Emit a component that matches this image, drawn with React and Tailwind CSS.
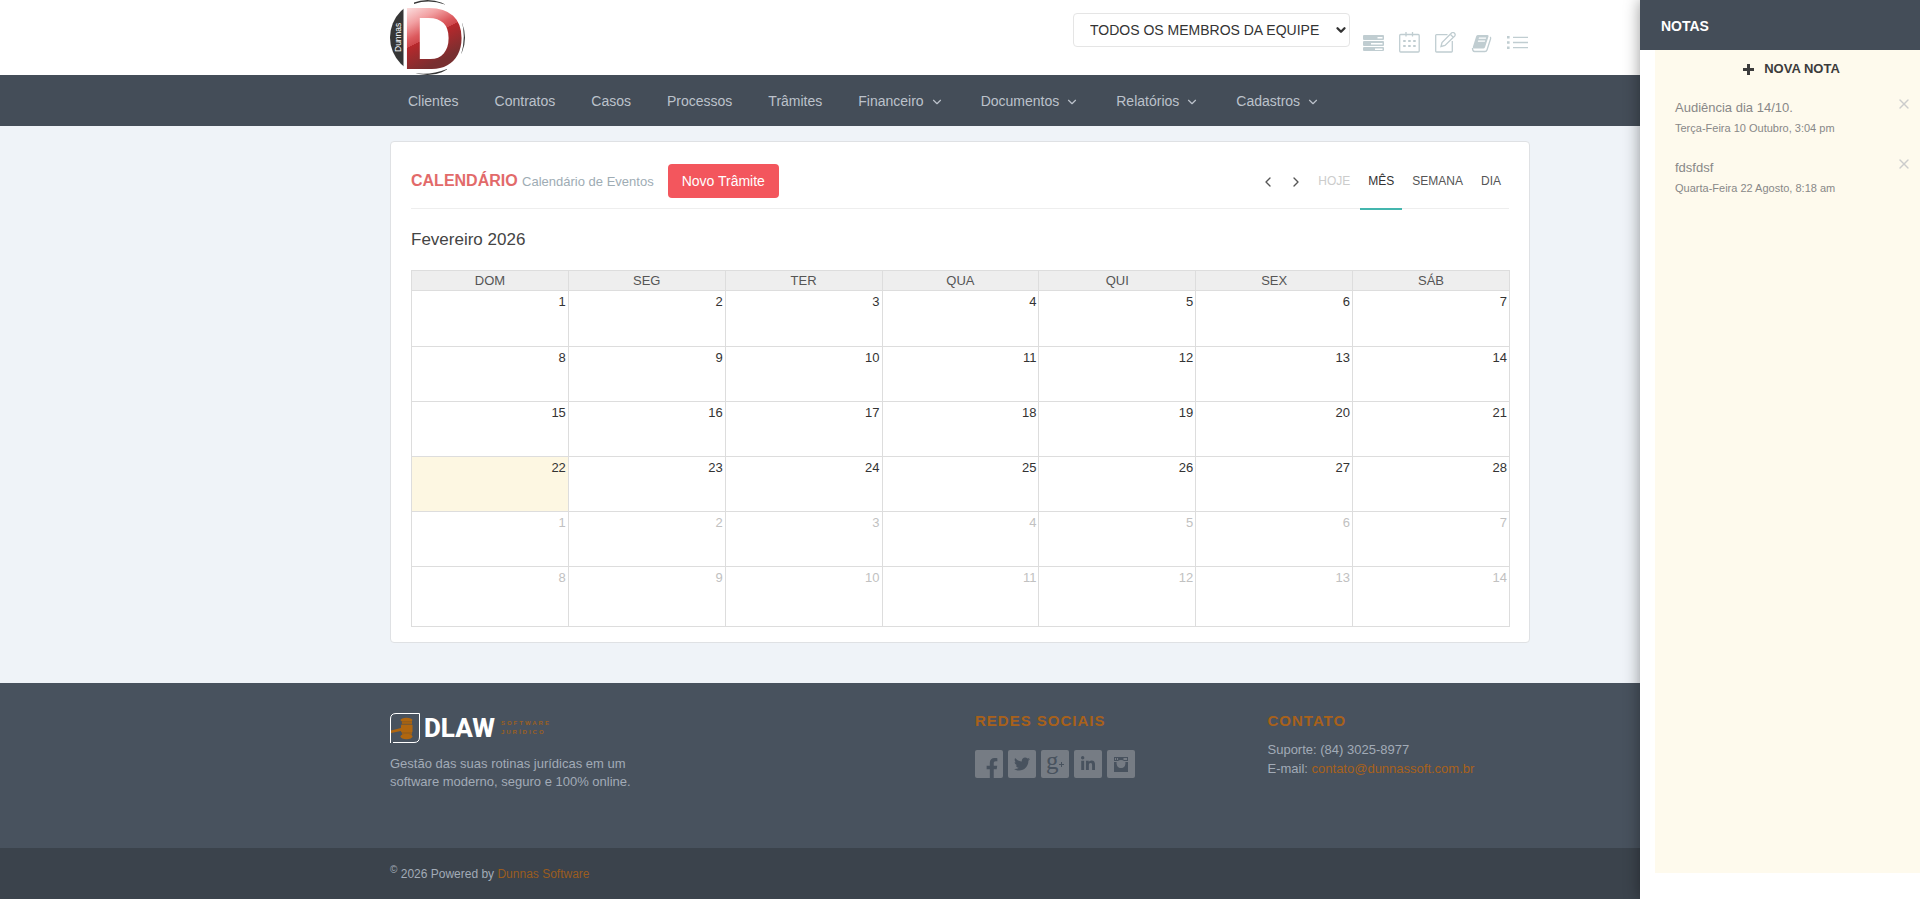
import { useState } from 'react';
import { ChevronLeft, ChevronRight, ChevronDown, X } from 'lucide-react';
import { FaFacebookF, FaTwitter, FaLinkedinIn } from 'react-icons/fa';

const navLinks = [
  { label: 'Clientes' },
  { label: 'Contratos' },
  { label: 'Casos' },
  { label: 'Processos' },
  { label: 'Trâmites' },
  { label: 'Financeiro', menu: true },
  { label: 'Documentos', menu: true },
  { label: 'Relatórios', menu: true },
  { label: 'Cadastros', menu: true },
];

const weekDays = ['DOM', 'SEG', 'TER', 'QUA', 'QUI', 'SEX', 'SÁB'];
const DAYS_IN_MONTH = 28;
const TODAY = 22;

const weeks = Array.from({ length: 6 }, (_, w) =>
  Array.from({ length: 7 }, (_, d) => {
    const n = w * 7 + d + 1;
    return n > DAYS_IN_MONTH ? { day: n - DAYS_IN_MONTH, other: true } : { day: n, other: false };
  })
);

const views = ['MÊS', 'SEMANA', 'DIA'];

const initialNotes = [
  { id: 1, text: 'Audiência dia 14/10.', date: 'Terça-Feira 10 Outubro, 3:04 pm' },
  { id: 2, text: 'fdsfdsf', date: 'Quarta-Feira 22 Agosto, 8:18 am' },
];

function DunnasLogo() {
  return (
    <svg viewBox="0 0 75 75" className="w-[75px] h-[75px] overflow-visible" role="img" aria-label="Dunnas">
      <defs>
        {/* hard stop at 0.6 is the edge of the shine */}
        <linearGradient id="letter" gradientUnits="userSpaceOnUse" x1="14" y1="5" x2="44" y2="64">
          <stop offset="0" stopColor="#fdeeee" />
          <stop offset="0.3" stopColor="#f2a0a2" />
          <stop offset="0.5" stopColor="#dc5a5e" />
          <stop offset="0.6" stopColor="#cf484c" />
          <stop offset="0.6" stopColor="#b8282c" />
          <stop offset="1" stopColor="#782f30" />
        </linearGradient>
        <clipPath id="disc"><circle cx="37.5" cy="37.5" r="37.5" /></clipPath>
      </defs>
      <g clipPath="url(#disc)" fill="#363636">
        <path d="M0 8H13.5V67H0Z" />
        <path d="M24 4Q39 -1 55 4.500V0H24Z" />
        <path d="M24 73Q41 75.500 57 69V75H24Z" />
        <path d="M72 22Q76 38 71 55H75V22Z" />
      </g>
      <text transform="translate(11 52) rotate(-90)" fontSize="8.500" fill="#fff" fontFamily="Liberation Sans, sans-serif">Dunnas</text>
      <text x="11" y="68.500" fontSize="89" fontWeight="700" fill="url(#letter)" fontFamily="Liberation Sans, sans-serif">D</text>
    </svg>
  );
}

function TasksIcon() {
  return (
    <svg viewBox="0 0 21 21" className="w-[21px] h-[21px]" fill="currentColor">
      <path fillRule="evenodd" d="M1 3H20Q21 3 21 4V7Q21 8 20 8H1Q0 8 0 7V4Q0 3 1 3ZM14.500 5V6.500H19.500V5ZM1 9H20Q21 9 21 10V13Q21 14 20 14H1Q0 14 0 13V10Q0 9 1 9ZM8 11V12.500H19.500V11ZM1 15H20Q21 15 21 16V18Q21 19 20 19H1Q0 19 0 18V16Q0 15 1 15ZM12 16.500V18H19.500V16.500Z" />
    </svg>
  );
}

function CalendarIcon() {
  return (
    <svg viewBox="0 0 21 21" className="w-[21px] h-[21px]" fill="none" stroke="currentColor" strokeWidth="1.300">
      <rect x="0.700" y="2.500" width="19.500" height="17.500" rx="1" />
      <path d="M7 0V4.500M13.500 0V4.500" />
      <path strokeWidth="2" strokeDasharray="2.500 2.500" d="M4.200 9H17M4.200 14H17" />
    </svg>
  );
}

function NoteIcon() {
  return (
    <svg viewBox="0 0 21 21" className="w-[21px] h-[21px]" fill="none" stroke="currentColor" strokeWidth="1.300">
      <path d="M12.500 2.700H1.500Q0.700 2.700 0.700 3.500V19.200Q0.700 20 1.500 20H16.500Q17.300 20 17.300 19.200V9" />
      <path d="M6 14.500L7 10.500L16.500 1Q18 -0.200 19.500 1.200Q20.800 2.700 19.700 4L10 13.500Z" />
      <path d="M15.500 2.500L18 5" />
    </svg>
  );
}

function BookIcon() {
  return (
    <svg viewBox="0 0 21 21" className="w-[21px] h-[21px]">
      <path fill="currentColor" fillRule="evenodd" d="M7 3H16.500Q18 3 17.500 4.500L14 15.300Q13.500 16.500 12.300 16.500H3Q1.500 16.500 1.800 15L5.200 4.300Q5.700 3 7 3ZM8 5.500L7.600 6.700H14.800L15.200 5.500ZM7.200 8.500L6.800 9.700H13.800L14.200 8.500Z" />
      <path fill="none" stroke="currentColor" strokeWidth="1.300" d="M19 5Q20 5.500 19.600 6.700L16 18Q15.500 19.500 14 19.500H3.500Q1.500 19.500 1.500 16" />
    </svg>
  );
}

function ListIcon() {
  return (
    <svg viewBox="0 0 21 21" className="w-[21px] h-[21px]">
      <path fill="currentColor" d="M0 4H2.600V6.600H0ZM0 9.200H2.600V11.800H0ZM0 14.400H2.600V17H0Z" />
      <path stroke="currentColor" strokeWidth="1.300" d="M6 5.300H21M6 10.500H21M6 15.700H21" />
    </svg>
  );
}

function GavelMark() {
  return (
    <svg viewBox="0 0 30 30" className="w-[30px] h-[30px]">
      <path fill="none" stroke="#fff" strokeWidth="1" d="M0.500 30V6Q0.500 0.500 6 0.500H29.500V24Q29.500 29.500 24 29.500H3" />
      <g fill="#b0660f">
        <ellipse cx="16.500" cy="7" rx="6" ry="2.200" />
        <rect x="12" y="8" width="10" height="3" />
        <rect x="11" y="11.500" width="11.500" height="8" rx="1" />
        <rect x="12" y="19" width="10" height="2.500" />
        <ellipse cx="16.500" cy="23.500" rx="6" ry="2.800" />
        <path d="M11 15L1 17.500V20L11 18Z" />
      </g>
      <path stroke="#7d5728" strokeWidth="0.700" d="M11 8.800H22M11.500 11H22M11.500 20H22" />
    </svg>
  );
}

function GooglePlusIcon() {
  return (
    <svg viewBox="0 0 28 28" className="w-7 h-7 overflow-visible" fill="currentColor">
      <text x="5" y="19" fontSize="25" fontFamily="Liberation Serif, serif">g</text>
      <path d="M18 14H20V12H21V14H23V15H21V17H20V15H18Z" />
    </svg>
  );
}

function InstagramIcon() {
  return (
    <svg viewBox="0 0 28 28" className="w-7 h-7" fill="currentColor">
      <path fillRule="evenodd" d="M7 7H21V11H7ZM8 8V10H9V8ZM10 8V10H11V8ZM16.500 8V10H20V8Z" />
      <path d="M7 12H9.700A4.500 4.500 0 1 0 18.300 12H21V22H7Z" />
      <circle cx="14" cy="14" r="4" fill="#767c84" />
    </svg>
  );
}

function PlusIcon() {
  return (
    <svg viewBox="0 0 11 11" className="w-[11px] h-[11px]" stroke="currentColor" strokeWidth="3">
      <path d="M0 5.500H11M5.500 0V11" />
    </svg>
  );
}

const shortcuts = [
  { label: 'Tarefas', Icon: TasksIcon },
  { label: 'Agenda', Icon: CalendarIcon },
  { label: 'Anotar', Icon: NoteIcon },
  { label: 'Livro', Icon: BookIcon },
  { label: 'Lista', Icon: ListIcon },
];

const socials = [
  { label: 'Facebook', icon: <FaFacebookF className="w-5 h-5 mt-2 ml-1.5" /> },
  { label: 'Twitter', icon: <FaTwitter className="w-4 h-4" /> },
  { label: 'Google Plus', icon: <GooglePlusIcon /> },
  { label: 'LinkedIn', icon: <FaLinkedinIn className="w-4 h-4" /> },
  { label: 'Instagram', icon: <InstagramIcon /> },
];

function Header() {
  return (
    <header>
      <div className="bg-white">
        <div className="max-w-[1170px] mx-auto px-[15px] flex justify-between">
          <a href="#"><DunnasLogo /></a>
          <div className="flex items-start">
            <div className="relative mt-[13px]">
              <select
                aria-label="Membros da equipe"
                className="appearance-none w-[277px] h-[34px] pl-4 pr-5 border border-[#e5e5e5] rounded bg-white text-sm text-[#333]"
              >
                <option>TODOS OS MEMBROS DA EQUIPE</option>
              </select>
              <ChevronDown className="absolute right-0.5 top-2.5 w-3.5 h-3.5 text-[#333] pointer-events-none" strokeWidth={4} />
            </div>
            <div className="flex gap-[15px] mt-8 ml-[13px] mr-0.5 text-[#c0cdd1]">
              {shortcuts.map(({ label, Icon }) => (
                <a key={label} href="#" aria-label={label}><Icon /></a>
              ))}
            </div>
          </div>
        </div>
      </div>
      <nav className="bg-[#444d58]">
        <div className="max-w-[1170px] mx-auto px-[15px] flex">
          {navLinks.map(l => (
            <a key={l.label} href="#" className="flex items-center px-[18px] pt-[17px] pb-[15px] text-sm leading-[19px] text-[#bcc2cb]">
              {l.label}
              {l.menu && <ChevronDown className="w-3.5 h-3.5 ml-1.5 mr-px" strokeWidth={2} />}
            </a>
          ))}
        </div>
      </nav>
    </header>
  );
}

function Calendar() {
  const [view, setView] = useState('MÊS');

  return (
    <section className="bg-white border border-[#dfe1e4] rounded px-5 pb-[15px]">
      <div className="flex justify-between min-h-[67px] pt-3 border-b border-[#eee]">
        <div className="flex items-center">
          <h1 className="text-base font-bold text-[#e26a6a]">
            CALENDÁRIO <span className="text-[13px] font-normal text-[#9eacb4]">Calendário de Eventos</span>
          </h1>
          <button className="ml-3.5 h-[34px] px-3.5 rounded bg-[#f3565d] text-sm text-white">Novo Trâmite</button>
        </div>
        <div className="flex gap-0.5 -mb-0.5 text-xs text-[#555]">
          <button aria-label="Anterior" className="px-1.5"><ChevronLeft className="w-4 h-4" strokeWidth={2} /></button>
          <button aria-label="Próximo" className="px-1"><ChevronRight className="w-4 h-4" strokeWidth={2} /></button>
          <button disabled className="px-2 pb-0.5 text-[#ccc]">HOJE</button>
          {views.map(v => (
            <button
              key={v}
              onClick={() => setView(v)}
              className={`px-2 border-b-2 ${view === v ? 'border-[#44b6ae] text-[#333]' : 'border-transparent'}`}
            >
              {v}
            </button>
          ))}
        </div>
      </div>

      <h2 className="mt-[21px] mb-5 text-[17px] leading-5 text-[#444]">Fevereiro 2026</h2>

      <table className="w-[calc(100%+1px)] table-fixed border-collapse text-[13px] leading-[18px]">
        <thead>
          <tr className="h-5 bg-[#eee] text-[#555]">
            {weekDays.map(d => (
              <th key={d} className="p-0 border border-[#ddd] font-normal">{d}</th>
            ))}
          </tr>
        </thead>
        <tbody>
          {weeks.map((week, i) => (
            <tr key={i} className="h-[55px] first:h-14 last:h-[60px]">
              {week.map(({ day, other }) => (
                <td
                  key={day}
                  className={`p-0.5 border border-[#ddd] align-top text-right ${other ? 'text-[#c1c1c1]' : 'text-[#333]'} ${!other && day === TODAY ? 'bg-[#fdf7e2]' : ''}`}
                >
                  {day}
                </td>
              ))}
            </tr>
          ))}
        </tbody>
      </table>
    </section>
  );
}

function Footer() {
  return (
    <footer className="flex-1 flex flex-col bg-[#3b434c]">
      <div className="bg-[#48525e] text-[13px] text-[#a2abb7]">
        <div className="max-w-[1170px] mx-auto px-[15px] pt-[30px] pb-[57px] grid grid-cols-4 gap-[30px]">
          <div>
            <div className="flex items-center h-[30px]">
              <GavelMark />
              <span className="ml-1 font-['Roboto','Liberation_Sans',sans-serif] text-[26px] leading-[30px] font-extrabold text-white">DLAW</span>
              <span className="ml-1.5 text-[6px] leading-[9px] tracking-[2px] font-bold text-[#9c601f]">
                SOFTWARE<br />JURÍDICO
              </span>
            </div>
            <p className="mt-3 leading-[18px]">Gestão das suas rotinas jurídicas em um software moderno, seguro e 100% online.</p>
          </div>
          <div className="col-start-3">
            <h2 className="text-[15px] leading-4 tracking-[1px] font-bold text-[#a8611a]">REDES SOCIAIS</h2>
            <ul className="flex gap-[5px] mt-[21px]">
              {socials.map(s => (
                <li key={s.label}>
                  <a href="#" aria-label={s.label} className="flex items-center justify-center w-7 h-7 rounded-xs bg-[#767c84] text-[#48525e]">{s.icon}</a>
                </li>
              ))}
            </ul>
          </div>
          <div>
            <h2 className="text-[15px] leading-4 tracking-[1px] font-bold text-[#a8611a]">CONTATO</h2>
            <address className="mt-[11px] not-italic leading-[19px]">
              Suporte: (84) 3025-8977<br />
              E-mail: <a href="mailto:contato@dunnassoft.com.br" className="text-[#a8611a]">contato@dunnassoft.com.br</a>
            </address>
          </div>
        </div>
      </div>
      <div className="w-full max-w-[1170px] mx-auto px-[15px] pt-[17px] pb-[15px] text-xs leading-[19px] text-[#a2abb7]">
        <sup className="text-[10px]">©</sup> 2026 Powered by <a href="#" className="text-[#9a5c1e]">Dunnas Software</a>
      </div>
    </footer>
  );
}

function NotesPanel() {
  const [notes, setNotes] = useState(initialNotes);

  const removeNote = (id) => setNotes(notes.filter(n => n.id !== id));

  return (
    <aside className="fixed inset-y-0 right-0 w-[280px] flex flex-col bg-white shadow-[0_0_15px_rgba(0,0,0,0.4)]">
      <h2 className="px-[21px] pt-[17px] pb-[15px] bg-[#444d58] text-sm leading-[18px] font-bold text-white">NOTAS</h2>
      <div className="flex-1 ml-[15px] mb-[26px] bg-[#fefaed]">
        <button className="flex items-center justify-center gap-2.5 w-full pt-2.5 pl-2 text-[13px] leading-[18px] font-bold text-[#3c3c3c]">
          <PlusIcon />
          NOVA NOTA
        </button>
        <ul className="pt-5 pl-5 pr-2">
          {notes.map(n => (
            <li key={n.id} className="flex justify-between items-start h-[60px] text-[#888]">
              <div>
                <p className="text-[13px] leading-5">{n.text}</p>
                <p className="text-[11px] leading-5">{n.date}</p>
              </div>
              <button aria-label="Excluir nota" onClick={() => removeNote(n.id)} className="-mt-0.5 text-[#ccc]">
                <X className="w-4 h-4" strokeWidth={2} />
              </button>
            </li>
          ))}
        </ul>
      </div>
    </aside>
  );
}

export default function App() {
  return (
    <div className="min-h-screen flex flex-col bg-[#eff3f8] font-['Liberation_Sans',Arial,sans-serif]">
      <Header />
      <main className="w-full max-w-[1170px] mx-auto px-[15px] pt-[15px] pb-10">
        <Calendar />
      </main>
      <Footer />
      <NotesPanel />
    </div>
  );
}
